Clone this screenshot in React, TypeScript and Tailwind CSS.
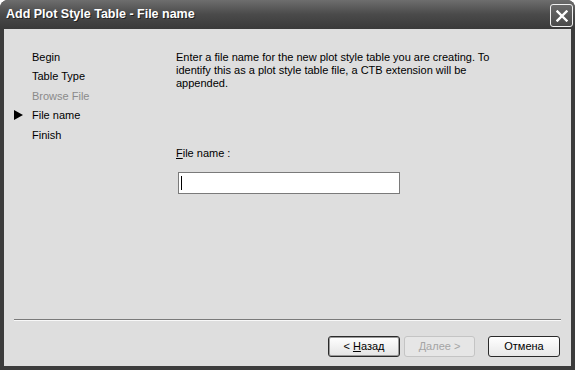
import React from "react";

export default function App() {
  const font = { fontFamily: '"Liberation Sans", Arial, sans-serif' };
  return (
    <div className="w-[575px] h-[370px] flex flex-col bg-[#3c3c3c] rounded-t-[8px] overflow-hidden" style={font}>
      {/* Title bar */}
      <div className="h-[29px] shrink-0 flex items-center justify-between pl-[6px] pr-[2px] bg-gradient-to-b from-[#6e6e6e] via-[#4a4a4a] to-[#3a3a3a]">
        <span className="text-white font-bold text-[12.5px]" style={{ fontFamily: '"Liberation Sans", Arial, sans-serif', textShadow: "1px 1px 0 #222" }}>
          Add Plot Style Table - File name
        </span>
        <div className="w-[23px] h-[23px] mt-[2px] rounded-[3px] border border-[#f0f0f0] bg-gradient-to-b from-[#6a6a6a] to-[#4a4a4a] flex items-center justify-center">
          <svg width="12" height="12" viewBox="0 0 12 12">
            <path d="M1.5 1.5 L10.5 10.5 M10.5 1.5 L1.5 10.5" stroke="#ffffff" strokeWidth="2.4" strokeLinecap="square" />
          </svg>
        </div>
      </div>
      {/* Body */}
      <div className="flex-1 mx-[4px] mb-[4px] bg-[#dedede] flex flex-col text-[11px] text-black">
        <div className="flex flex-1">
          {/* Sidebar */}
          <div className="w-[172px] pt-[18px] pl-[10px]">
            {[
              ["Begin", false, false],
              ["Table Type", false, false],
              ["Browse File", true, false],
              ["File name", false, true],
              ["Finish", false, false],
            ].map(([label, disabled, active]) => (
              <div key={label as string} className="flex items-center h-[19.5px]">
                <span className="w-[18px] flex items-center">
                  {active ? (
                    <svg width="9" height="10" viewBox="0 0 9 10">
                      <path d="M0 0 L9 5 L0 10 Z" fill="#000" />
                    </svg>
                  ) : null}
                </span>
                <span className={disabled ? "text-[#8a8a8a]" : "text-black"}>{label as string}</span>
              </div>
            ))}
          </div>
          {/* Main */}
          <div className="flex-1 pt-[22px]">
            <p className="leading-[13px]">
              Enter a file name for the new plot style table you are creating. To
              <br />
              identify this as a plot style table file, a CTB extension will be
              <br />
              appended.
            </p>
            <div className="mt-[57px] leading-[13px]">
              <span className="underline">F</span>ile name :
            </div>
            <div className="mt-[12px] ml-[2px] w-[222px] h-[22px] bg-white border border-[#7a7a7a] flex items-center pl-[2px]">
              <div className="w-[1px] h-[14px] bg-black" />
            </div>
          </div>
        </div>
        {/* Separator */}
        <div className="mx-[10px] border-t border-[#7a7a7a] border-b border-b-[#f8f8f8]" />
        {/* Footer */}
        <div className="h-[45px] flex items-start justify-end pt-[15px] pr-[11px]">
          <button className="w-[72px] h-[21px] rounded-[3px] border border-[#2a2a2a] bg-gradient-to-b from-[#ffffff] to-[#e4e4e4] shadow-[inset_0_0_0_1px_#9a9a9a] text-[11px] text-black flex items-center justify-center">
            &lt; <span className="underline ml-[3px]">Н</span>азад
          </button>
          <button className="ml-[4px] w-[71px] h-[21px] rounded-[3px] border border-[#c4c4c4] bg-[#e6e6e6] text-[11px] text-[#a4a4a4] flex items-center justify-center">
            <span className="underline">Д</span>алее &gt;
          </button>
          <button className="ml-[13px] w-[72px] h-[21px] rounded-[3px] border border-[#2a2a2a] bg-gradient-to-b from-[#ffffff] to-[#e8e8e8] text-[11px] text-black flex items-center justify-center">
            Отмена
          </button>
        </div>
      </div>
    </div>
  );
}
